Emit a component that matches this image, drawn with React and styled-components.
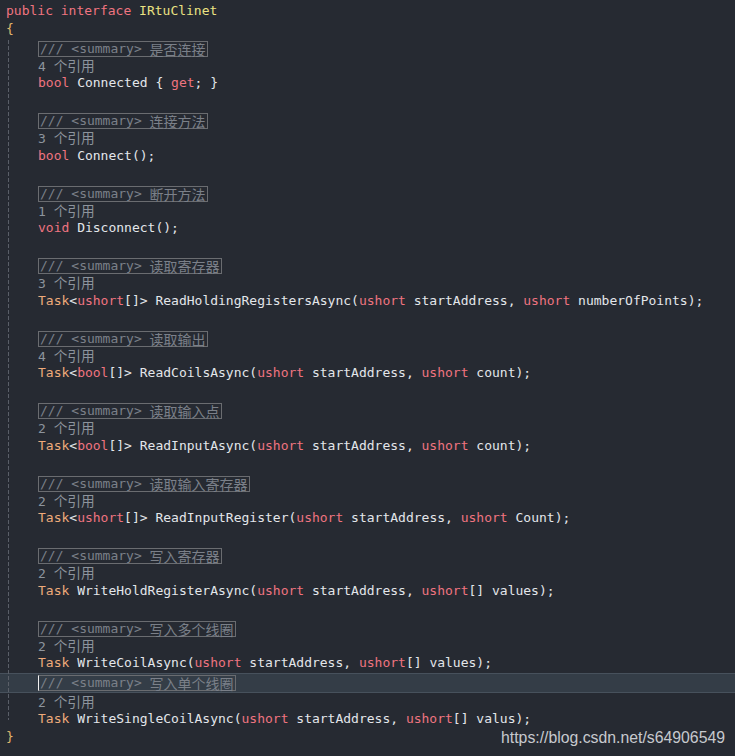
import React from 'react';
import styled, { createGlobalStyle } from 'styled-components';

const GlobalStyle = createGlobalStyle`
  html, body {
    margin: 0;
    padding: 0;
    background: #262a32;
    overflow: hidden;
  }
`;

const Editor = styled.div`
  position: relative;
  width: 735px;
  height: 756px;
  padding-top: 2px;
  box-sizing: border-box;
  overflow: hidden;
  background: #262a32;
  font-family: "DejaVu Sans Mono", "Liberation Mono", monospace;
  font-size: 13px;
  color: #e3e6ea;
`;

const Line = styled.div`
  display: flex;
  align-items: center;
  height: ${p => p.$h || 18}px;
  line-height: ${p => p.$h || 18}px;
  padding-left: ${p => (p.$indent ? 38 : 6)}px;
  white-space: pre;
  box-sizing: border-box;
`;

const SummaryLine = styled(Line)`
  padding-top: 2px;
  ${p => p.$current && `
    margin-top: 1px;
    padding-top: 0;
    background: #343d47;
    border-top: 1px solid #47515c;
    border-bottom: 1px solid #47515c;
  `}
`;

const Body = styled.div`
  position: relative;

  &::before {
    content: "";
    position: absolute;
    left: 8px;
    top: 2px;
    bottom: 8px;
    width: 1px;
    background: repeating-linear-gradient(to bottom, #5a5f68 0 4px, transparent 4px 6px);
    z-index: 1;
  }
`;

const SummaryBox = styled.span`
  display: inline-flex;
  align-items: center;
  height: 16px;
  line-height: 14px;
  padding: 0 1px;
  box-sizing: border-box;
  border: 1px solid #6a6c70;
  border-left-color: ${p => (p.$caret ? '#f0f0f0' : '#6a6c70')};
  color: #7b8089;
`;

const Cjk = styled.span`
  font-family: "Noto Sans CJK SC", sans-serif;
  font-size: ${p => p.$size || 14}px;
`;

const Lens = styled.span`
  color: #8d949d;
`;

const Tok = styled.span`
  color: ${p =>
    p.$kind === 'kw' ? '#ef7480'
    : p.$kind === 'type' ? '#eeaa7b'
    : p.$kind === 'cls' ? '#ebe282'
    : p.$kind === 'brace' ? '#e0b86d'
    : '#e3e6ea'};
`;

const Watermark = styled.div`
  position: absolute;
  right: 10px;
  bottom: 9px;
  font-family: "Liberation Sans", Arial, sans-serif;
  font-size: 15.8px;
  line-height: 18px;
  color: #c6c9ce;
`;

const KEYWORDS = ['bool', 'void', 'ushort', 'get', 'public', 'interface'];

function Code({ text, cls }) {
  const parts = text.split(/(\b\w+\b)/).filter(Boolean);
  return (
    <span>
      {parts.map((p, i) => {
        let kind = 'id';
        if (KEYWORDS.includes(p)) kind = 'kw';
        else if (p === 'Task') kind = 'type';
        else if (p === cls) kind = 'cls';
        return <Tok key={i} $kind={kind}>{p}</Tok>;
      })}
    </span>
  );
}

const members = [
  { summary: '是否连接', refs: 4, code: 'bool Connected { get; }' },
  { summary: '连接方法', refs: 3, code: 'bool Connect();' },
  { summary: '断开方法', refs: 1, code: 'void Disconnect();' },
  { summary: '读取寄存器', refs: 3, code: 'Task<ushort[]> ReadHoldingRegistersAsync(ushort startAddress, ushort numberOfPoints);' },
  { summary: '读取输出', refs: 4, code: 'Task<bool[]> ReadCoilsAsync(ushort startAddress, ushort count);' },
  { summary: '读取输入点', refs: 2, code: 'Task<bool[]> ReadInputAsync(ushort startAddress, ushort count);' },
  { summary: '读取输入寄存器', refs: 2, code: 'Task<ushort[]> ReadInputRegister(ushort startAddress, ushort Count);' },
  { summary: '写入寄存器', refs: 2, code: 'Task WriteHoldRegisterAsync(ushort startAddress, ushort[] values);' },
  { summary: '写入多个线圈', refs: 2, code: 'Task WriteCoilAsync(ushort startAddress, ushort[] values);', tight: true },
  { summary: '写入单个线圈', refs: 2, code: 'Task WriteSingleCoilAsync(ushort startAddress, ushort[] valus);', current: true, tight: true },
];

function Member({ m }) {
  return (
    <>
      <SummaryLine $indent $h={m.current ? 20 : 19} $current={m.current}>
        <SummaryBox $caret={m.current}>
          {'/// <summary> '}<Cjk>{m.summary}</Cjk>
        </SummaryBox>
      </SummaryLine>
      <Line $indent $h={17}>
        <Lens>{m.refs} <Cjk $size={13.7}>个引用</Cjk></Lens>
      </Line>
      <Line $indent $h={18}>
        <Code text={m.code} />
      </Line>
      {!m.tight && <Line $h={18.55} />}
    </>
  );
}

export default function App() {
  return (
    <Editor>
      <GlobalStyle />
      <Line>
        <Code text="public interface IRtuClinet" cls="IRtuClinet" />
      </Line>
      <Line>
        <Tok $kind="brace">{'{'}</Tok>
      </Line>
      <Body>
        {members.map((m, i) => <Member key={i} m={m} />)}
      </Body>
      <Line>
        <Tok $kind="brace">{'}'}</Tok>
      </Line>
      <Watermark>https://blog.csdn.net/s64906549</Watermark>
    </Editor>
  );
}
